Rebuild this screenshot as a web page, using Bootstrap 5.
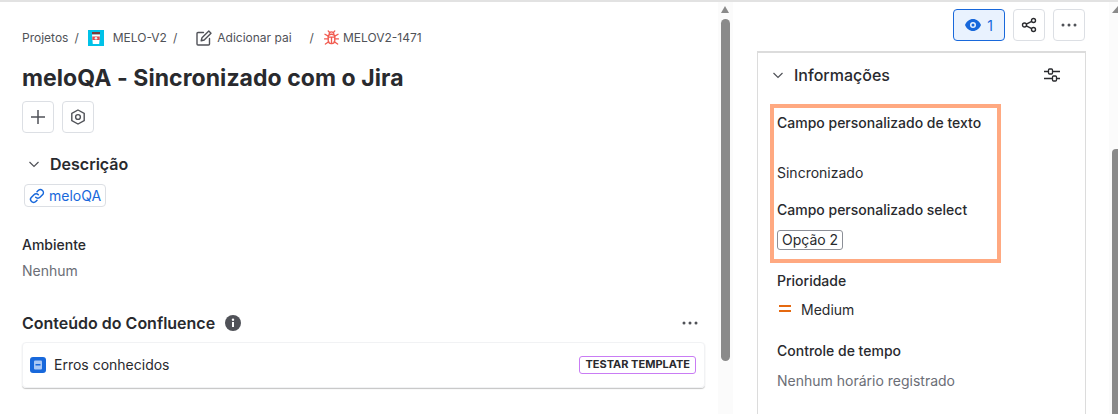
<!DOCTYPE html>
<html lang="pt-BR">
<head>
    <meta charset="UTF-8">
    <meta name="viewport" content="width=device-width, initial-scale=1.0">
    <title>MELOV2-1471</title>
    <link href="https://cdn.jsdelivr.net/npm/bootstrap@5.3.0/dist/css/bootstrap.min.css" rel="stylesheet">
    <style>
        html, body { height: 414px; overflow: hidden; }
        body {
            background: #fff;
            font-family: Inter, "Liberation Sans", sans-serif;
            font-size: 14px;
            color: #292a2e;
        }
        .shell { height: 414px; border-top: 2px solid #e2e2e2; }
        .main-pane { width: 718px; padding: 0 13px 0 22px; }
        .crumbs { height: 35px; margin-top: 18px; font-size: 12px; color: #505258; }
        .crumbs .sep-a { margin-left: 6px; }
        .crumbs .logo-ico { margin-left: 9px; }
        .crumbs .proj-name { margin-left: 9px; }
        .crumbs .edit-ico { margin-left: 19px; }
        .crumbs .ico-text { margin-left: 5px; }
        .crumbs .sep-b { margin-left: 18px; }
        .crumbs .bug-ico { margin-left: 10px; }
        .crumbs .bug-text { margin-left: 4px; }
        .issue-title { font-size: 23px; font-weight: 700; line-height: 32px; letter-spacing: .06px; margin: 7px 0; color: #292a2e; }
        .sq-btn {
            width: 32px; height: 32px; padding: 0; background: #fff;
            border: 1px solid #dcdfe4; border-radius: 4px; color: #44546f;
        }
        .sect-title { font-size: 16px; font-weight: 600; line-height: 20px; margin: 0; color: #292a2e; }
        .desc-head { margin: 21px 0 10px 6px; }
        .desc-head .sect-title { margin-left: 10px; }
        .link-chip {
            height: 23px; margin-left: 2px; padding: 0 4px; font-size: 14px; color: #1868db;
            border: 1px solid #dcdfe4; border-radius: 4px; text-decoration: none;
        }
        .field-label { font-size: 14px; font-weight: 500; line-height: 20px; margin: 0; color: #292a2e; }
        .muted-val { font-size: 14px; line-height: 20px; color: #6b6e76; }
        .env-label { margin-top: 26px; }
        .env-val { margin-top: 6px; }
        .conf-head { height: 20px; margin-top: 32px; }
        .conf-head .info-ico { margin-left: 10px; }
        .conf-head .dots-ico { margin-right: 7px; }
        .conf-card {
            height: 46px; margin-top: 9px; padding: 0 8px 0 7px; border: 1px solid #f1f2f4; border-radius: 4px;
            box-shadow: 0 1px 1px #c4c4c4;
        }
        .conf-name { margin-left: 8px; }
        .tpl-tag {
            height: 18px; padding: 0 5px; font-size: 11px; font-weight: 700;
            border: 1px solid #c97cf4; border-radius: 3px; color: #292a2e; background: #fff;
        }
        .bar-track { width: 15px; background: #fbfbfb; }
        .bar-thumb { width: 9px; height: 342px; margin-left: 3px; background: #8a8a8a; border-radius: 5px; }
        .bar-arrow { width: 0; height: 0; margin: 4px 0 6px 3px; border: 4.5px solid transparent; border-top: 0; border-bottom: 7px solid #8a8a8a; }
        .side-pane { width: 376px; padding-left: 24px; }
        .side-tools { width: 328px; margin-top: 7px; }
        .watch-btn {
            width: 52px; height: 32px; padding: 0; background: #e9f2fe; color: #1868db;
            border: 1px solid #1868db; border-radius: 4px; font-size: 14px;
        }
        .watch-count { margin-left: 2px; }
        .info-panel { width: 329px; height: 363px; margin-top: 10px; border: 1px solid #dcdcdc; border-top-width: 2px; border-bottom: 0; padding: 0 12px; }
        .info-head { height: 44px; padding: 0 13px 0 2px; }
        .info-head span { margin-left: 10px; font-size: 16px; font-weight: 500; color: #292a2e; }
        .hilite { width: 231px; height: 159px; margin-top: 7px; margin-bottom: 8px; padding: 5px 3px 0; border: 4px solid #ffa981; }
        .sync-val { margin-top: 30px; line-height: 20px; }
        .select-label { margin-top: 17px; }
        .opt-row { margin-top: 10px; }
        .opt-chip { height: 20px; padding: 0 4px; border: 1px solid #8c8f97; border-radius: 3px; font-size: 14px; line-height: 18px; }
        .side-field { padding-left: 7px; }
        .prio-row { height: 20px; margin-top: 8px; }
        .prio-ico { margin-left: 2px; }
        .prio-name { margin-left: 10px; }
        .time-label { margin-top: 22px; }
        .time-val { margin-top: 10px; }
        .side-bar { width: 9px; background: #fbfbfb; }
        .side-arrow { width: 0; height: 0; margin: 4px 0 0 3px; border-left: 6px solid transparent; border-bottom: 7px solid #8a8a8a; }
        .side-thumb { width: 6px; height: 265px; margin: 136px 0 0 3px; background: #8a8a8a; border-radius: 4px 0 0 0; }
    </style>
</head>
<body>
    <div class="shell d-flex">
        <div class="main-pane flex-shrink-0">
            <div class="crumbs d-flex align-items-center">
                <span>Projetos</span>
                <span class="sep-a">/</span>
                <svg class="logo-ico" width="16" height="16" viewBox="0 0 16 16">
                    <rect width="16" height="16" fill="#00c2e8"/>
                    <rect x="4" y="2" width="8" height="2.500" fill="#7a3b3b"/>
                    <path d="M4 4.500h8l-.8 9.500H4.800z" fill="#fff"/>
                    <rect x="4.300" y="6.500" width="7.400" height="3.500" fill="#e5484d"/>
                    <circle cx="8" cy="8.200" r="1.300" fill="#d8f6fb"/>
                </svg>
                <span class="proj-name">MELO-V2</span>
                <span class="sep-a">/</span>
                <svg class="edit-ico" width="16" height="16" viewBox="0 0 16 16" fill="none" stroke="#505258" stroke-width="1.400" stroke-linecap="round" stroke-linejoin="round">
                    <path d="M7.500 2.500H2a1 1 0 0 0-1 1v10.500a1 1 0 0 0 1 1h10.500a1 1 0 0 0 1-1V8.500"/>
                    <path d="M12.800 1l2.200 2.200-6.800 6.800-3 .8.800-3z"/>
                </svg>
                <span class="ico-text">Adicionar pai</span>
                <span class="sep-b">/</span>
                <svg class="bug-ico" width="15" height="15" viewBox="0 0 16 16" fill="none" stroke="#f15b50" stroke-width="1.400" stroke-linecap="round">
                    <rect x="4.500" y="4.500" width="7" height="10" rx="3.200"/>
                    <path d="M5.500 4.500a2.500 2.500 0 0 1 5 0M4.500 1L6 2.800M11.500 1L10 2.800M4.500 6.500L1 4.500M11.500 6.500l3.500-2M4.500 9.500H.5M11.500 9.500h4M5 12.500L1.500 15M11 12.500l3.500 2.500M4.500 7.500h7M8 7.500V14"/>
                </svg>
                <span class="bug-text">MELOV2-1471</span>
            </div>
            <h1 class="issue-title">meloQA - Sincronizado com o Jira</h1>
            <div class="d-flex gap-2">
                <button class="sq-btn d-flex align-items-center justify-content-center" aria-label="Adicionar">
                    <svg width="16" height="16" viewBox="0 0 16 16" stroke="#505258" stroke-width="1.500"><path d="M8 1v14M1 8h14"/></svg>
                </button>
                <button class="sq-btn d-flex align-items-center justify-content-center" aria-label="Apps">
                    <svg width="16" height="16" viewBox="0 0 16 16" fill="none" stroke="#505258" stroke-width="1.400"><path d="M8 1l6.200 3.500v7L8 15l-6.200-3.500v-7z"/><circle cx="8" cy="8" r="2.400"/></svg>
                </button>
            </div>
            <div class="desc-head d-flex align-items-center">
                <svg width="12" height="12" viewBox="0 0 12 12" fill="none" stroke="#505258" stroke-width="1.200"><path d="M1.500 4l4.500 4.500L10.500 4"/></svg>
                <h2 class="sect-title">Descrição</h2>
            </div>
            <a href="#" class="link-chip d-inline-flex align-items-center gap-1">
                <svg width="16" height="16" viewBox="0 0 16 16" fill="none" stroke="#1868db" stroke-width="1.500" stroke-linecap="round"><path d="M6.700 9.300a3 3 0 0 0 4.300 0l2.500-2.500a3 3 0 0 0-4.300-4.300L8 3.700"/><path d="M9.300 6.700a3 3 0 0 0-4.300 0L2.500 9.200a3 3 0 0 0 4.300 4.300L8 12.300"/></svg>
                meloQA
            </a>
            <p class="field-label env-label">Ambiente</p>
            <div class="muted-val env-val">Nenhum</div>
            <div class="conf-head d-flex align-items-center">
                <h2 class="sect-title">Conteúdo do Confluence</h2>
                <svg class="info-ico" width="16" height="16" viewBox="0 0 16 16"><circle cx="8" cy="8" r="8" fill="#505258"/><rect x="7" y="7" width="2" height="5" fill="#fff"/><circle cx="8" cy="4.800" r="1.200" fill="#fff"/></svg>
                <svg class="dots-ico ms-auto" width="16" height="4" viewBox="0 0 16 4" fill="#505258"><circle cx="2" cy="2" r="1.500"/><circle cx="8" cy="2" r="1.500"/><circle cx="14" cy="2" r="1.500"/></svg>
            </div>
            <div class="conf-card d-flex align-items-center">
                <svg width="16" height="16" viewBox="0 0 16 16"><rect width="16" height="16" rx="3" fill="#1868db"/><rect x="4" y="3.500" width="8" height="9" rx="1" fill="#a9c8f5"/><rect x="5.500" y="7" width="5" height="1.500" fill="#1868db"/></svg>
                <span class="conf-name">Erros conhecidos</span>
                <span class="tpl-tag ms-auto d-flex align-items-center">TESTAR TEMPLATE</span>
            </div>
        </div>
        <div class="bar-track flex-shrink-0">
            <div class="bar-arrow"></div>
            <div class="bar-thumb"></div>
        </div>
        <div class="side-pane flex-shrink-0">
            <div class="side-tools d-flex justify-content-end gap-2">
                <button class="watch-btn d-flex align-items-center justify-content-center gap-1">
                    <svg width="16" height="12" viewBox="0 0 16 12"><path fill-rule="evenodd" fill="#1868db" d="M8 0c3.600 0 6.500 2.500 8 6-1.500 3.500-4.400 6-8 6S1.500 9.500 0 6c1.500-3.500 4.400-6 8-6zm0 3a3 3 0 1 0 0 6 3 3 0 0 0 0-6z"/><circle cx="8" cy="6" r="1.500" fill="#1868db"/></svg>
                    <span class="watch-count">1</span>
                </button>
                <button class="sq-btn d-flex align-items-center justify-content-center" aria-label="Compartilhar">
                    <svg width="16" height="16" viewBox="0 0 16 16" fill="none" stroke="#292a2e" stroke-width="1.400"><circle cx="12.500" cy="3.500" r="2"/><circle cx="3.500" cy="8" r="2"/><circle cx="12.500" cy="12.500" r="2"/><path d="M5.300 7.100l5.400-2.700M5.300 8.900l5.400 2.700"/></svg>
                </button>
                <button class="sq-btn d-flex align-items-center justify-content-center" aria-label="Mais">
                    <svg width="16" height="4" viewBox="0 0 16 4" fill="#505258"><circle cx="2" cy="2" r="1.500"/><circle cx="8" cy="2" r="1.500"/><circle cx="14" cy="2" r="1.500"/></svg>
                </button>
            </div>
            <div class="info-panel">
                <div class="info-head d-flex align-items-center">
                    <svg width="12" height="12" viewBox="0 0 12 12" fill="none" stroke="#505258" stroke-width="1.200"><path d="M1.500 4l4.500 4.500L10.500 4"/></svg>
                    <span>Informações</span>
                    <svg class="ms-auto" width="16" height="14" viewBox="0 0 16 14" fill="none" stroke="#292a2e" stroke-width="1.300"><path d="M0 3.500h4M9 3.500h7M0 10.500h8M13 10.500h3"/><rect x="4.500" y="1" width="4" height="5" rx="1"/><rect x="8.500" y="8" width="4" height="5" rx="1"/></svg>
                </div>
                <div class="hilite">
                    <p class="field-label">Campo personalizado de texto</p>
                    <div class="sync-val">Sincronizado</div>
                    <p class="field-label select-label">Campo personalizado select</p>
                    <div class="opt-row d-flex"><span class="opt-chip">Opção 2</span></div>
                </div>
                <div class="side-field">
                    <p class="field-label">Prioridade</p>
                    <div class="prio-row d-flex align-items-center">
                        <svg class="prio-ico" width="12" height="8" viewBox="0 0 12 8" fill="#e56910"><rect width="12" height="2"/><rect y="5" width="12" height="2"/></svg>
                        <span class="prio-name">Medium</span>
                    </div>
                    <p class="field-label time-label">Controle de tempo</p>
                    <div class="muted-val time-val">Nenhum horário registrado</div>
                </div>
            </div>
        </div>
        <div class="side-bar flex-shrink-0">
            <div class="side-arrow"></div>
            <div class="side-thumb"></div>
        </div>
    </div>
</body>
</html>
